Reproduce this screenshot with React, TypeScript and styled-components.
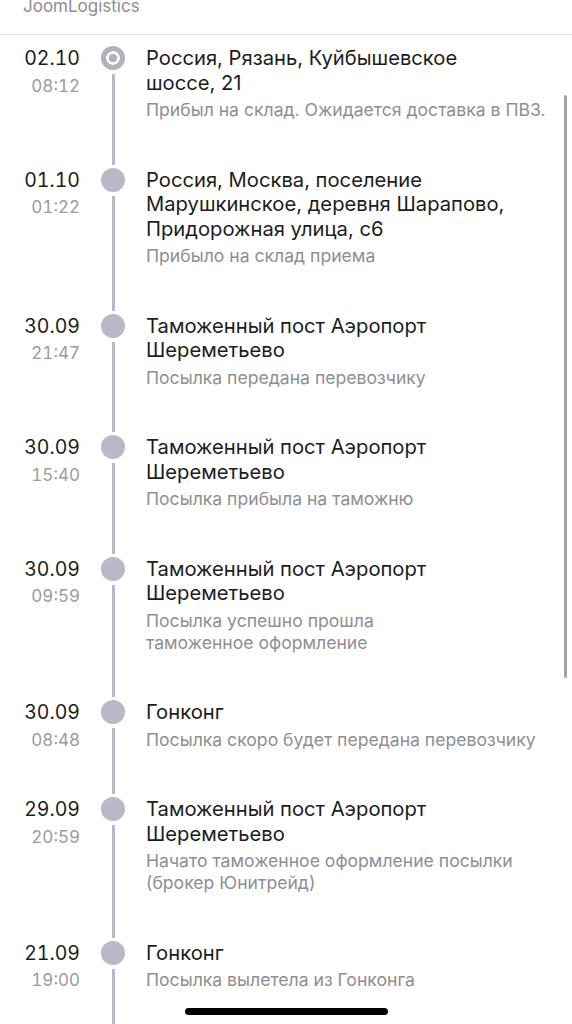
import React from "react";
import styled, { createGlobalStyle } from "styled-components";

interface TrackEvent {
  date: string;
  time: string;
  place: string;
  status: string;
}

const events: TrackEvent[] = [
  {
    date: "02.10",
    time: "08:12",
    place: "Россия, Рязань, Куйбышевское\nшоссе, 21",
    status: "Прибыл на склад. Ожидается доставка в ПВЗ.",
  },
  {
    date: "01.10",
    time: "01:22",
    place: "Россия, Москва, поселение\nМарушкинское, деревня Шарапово,\nПридорожная улица, с6",
    status: "Прибыло на склад приема",
  },
  {
    date: "30.09",
    time: "21:47",
    place: "Таможенный пост Аэропорт\nШереметьево",
    status: "Посылка передана перевозчику",
  },
  {
    date: "30.09",
    time: "15:40",
    place: "Таможенный пост Аэропорт\nШереметьево",
    status: "Посылка прибыла на таможню",
  },
  {
    date: "30.09",
    time: "09:59",
    place: "Таможенный пост Аэропорт\nШереметьево",
    status: "Посылка успешно прошла\nтаможенное оформление",
  },
  {
    date: "30.09",
    time: "08:48",
    place: "Гонконг",
    status: "Посылка скоро будет передана перевозчику",
  },
  {
    date: "29.09",
    time: "20:59",
    place: "Таможенный пост Аэропорт\nШереметьево",
    status: "Начато таможенное оформление посылки\n(брокер Юнитрейд)",
  },
  {
    date: "21.09",
    time: "19:00",
    place: "Гонконг",
    status: "Посылка вылетела из Гонконга",
  },
];

const GlobalStyle = createGlobalStyle`
  html, body {
    margin: 0;
    padding: 0;
    background: #ffffff;
    overflow: hidden;
  }
  body {
    font-family: Inter, "Noto Sans", sans-serif;
    -webkit-font-smoothing: antialiased;
  }
`;

export default function App() {
  return (
    <>
      <GlobalStyle />
      <Screen>
        <Header>
          <Carrier>JoomLogistics</Carrier>
        </Header>
        <Timeline>
          {events.map((ev, i) => (
            <Row key={i}>
              <When>
                <DateText>{ev.date}</DateText>
                <TimeText>{ev.time}</TimeText>
              </When>
              <Marker>
                <Dot current={i === 0} />
                <Line />
              </Marker>
              <Info>
                <Place>{ev.place}</Place>
                <Status>{ev.status}</Status>
              </Info>
            </Row>
          ))}
        </Timeline>
        <ScrollThumb />
        <HomeIndicator />
      </Screen>
    </>
  );
}

const Screen = styled.div`
  position: relative;
  width: 572px;
  height: 1024px;
  overflow: hidden;
  background: #ffffff;
`;

const Header = styled.div`
  height: 35px;
  box-sizing: border-box;
  display: flex;
  align-items: flex-end;
  padding: 0 0 17px 23px;
  border-bottom: 1px solid #e2e2e6;
`;

const Carrier = styled.span`
  font-size: 17px;
  line-height: 22px;
  color: #8e8e93;
`;

const Timeline = styled.div`
  display: flex;
  flex-direction: column;
  padding-top: 11px;
`;

const Row = styled.div`
  display: grid;
  grid-template-columns: 80px 24px 1fr;
  column-gap: 21px;
`;

const When = styled.div`
  display: flex;
  flex-direction: column;
  align-items: flex-end;
  font-variant-numeric: tabular-nums;
  font-feature-settings: "tnum";
`;

const DateText = styled.span`
  font-size: 19.5px;
  line-height: 24.5px;
  color: #1c1c1e;
`;

const TimeText = styled.span`
  margin-top: 4px;
  font-size: 17px;
  line-height: 22px;
  color: #9b9ba1;
`;

const Marker = styled.div`
  display: flex;
  flex-direction: column;
  align-items: center;
`;

const Dot = styled.div<{ current: boolean }>`
  flex: none;
  width: 24px;
  height: 24px;
  box-sizing: border-box;
  border-radius: 50%;
  background: ${({ current }) =>
    current
      ? "radial-gradient(circle, #b2b2bd 0 4px, #ffffff 4.5px 6.5px, #b2b2bd 7px)"
      : "#b8b8c6"};
`;

const Line = styled.div`
  flex: 1;
  width: 3px;
  margin: 4px 0 3px;
  background: #b9b9c5;
`;

const Info = styled.div`
  display: flex;
  flex-direction: column;
  padding-bottom: 46.5px;
`;

const Place = styled.div`
  font-size: 20.2px;
  line-height: 24.5px;
  color: #1c1c1e;
  white-space: pre-line;
`;

const Status = styled.div`
  margin-top: 4px;
  font-size: 17.6px;
  line-height: 22px;
  color: #8e8e93;
  white-space: pre-line;
`;

const ScrollThumb = styled.div`
  position: absolute;
  left: 564px;
  top: 95px;
  width: 3px;
  height: 583px;
  border-radius: 2px;
  background: #a3a3a6;
`;

const HomeIndicator = styled.div`
  position: absolute;
  left: 185px;
  bottom: 9px;
  width: 203px;
  height: 7px;
  border-radius: 4px;
  background: #000000;
`;
